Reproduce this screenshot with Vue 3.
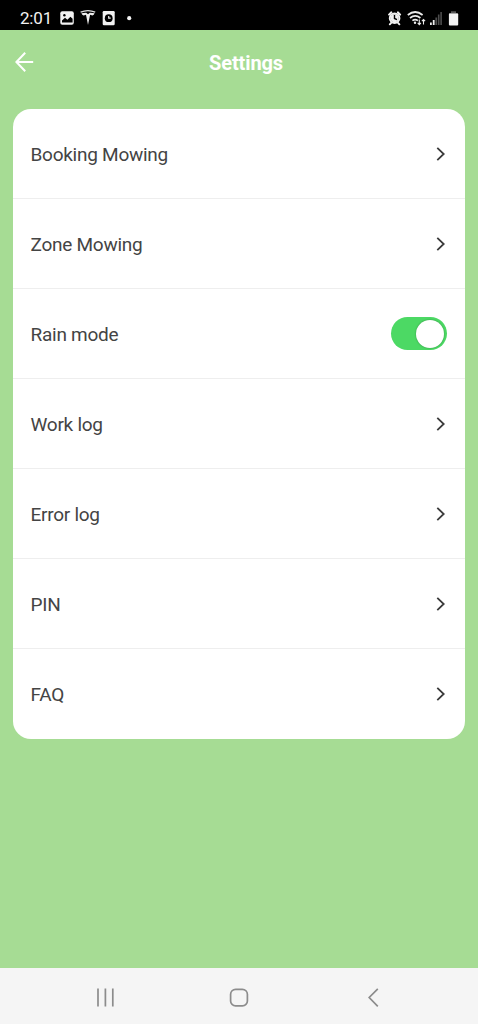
<script setup>
const rows = [
  { label: 'Booking Mowing' },
  { label: 'Zone Mowing' },
  { label: 'Rain mode', toggle: true },
  { label: 'Work log' },
  { label: 'Error log' },
  { label: 'PIN' },
  { label: 'FAQ' },
]
</script>

<template>
  <div class="screen">
    <div class="status">
      <span class="time">2:01</span>
      <svg class="left-icons" width="76" height="30" viewBox="58 0 76 30">
        <rect x="60.3" y="11.2" width="13.5" height="13.6" rx="2" fill="#f2f2f2" />
        <circle cx="64.4" cy="15.3" r="1.2" fill="#000" />
        <path d="M62 22.6v-2.2l3-2.6 2.4 2 3-3 2.2 2v3.8z" fill="#000" />
        <path d="M80.6 12.2Q88 9 95.2 12.2" fill="none" stroke="#ddd" stroke-width="1.3" />
        <path d="M81.4 13.3Q84 12.6 86.2 12.7L88 14.2l1.8-1.5q2.4-.1 4.8.6-.6 2.1-2.2 2.1l-2.3-.6L88 25l-2-10.2-2.4.6q-1.5 0-2.2-2.1z" fill="#eee" />
        <rect x="102.7" y="11" width="12" height="14.3" rx="1.2" fill="#f2f2f2" />
        <circle cx="108.7" cy="18.2" r="3.9" fill="#000" />
        <path d="M108.7 16v2.2h2" fill="none" stroke="#eee" stroke-width="1.2" />
        <circle cx="129.2" cy="18.2" r="2.1" fill="#f2f2f2" />
      </svg>
      <svg class="right-icons" width="78" height="30" viewBox="386 0 78 30">
        <circle cx="394.6" cy="18.2" r="4.8" fill="none" stroke="#f2f2f2" stroke-width="2" />
        <circle cx="394.6" cy="18.2" r="4" fill="#f2f2f2" />
        <path d="M389 14.6l2.4-2.3M400.2 14.6l-2.4-2.3M391.2 22.8l-1.4 1.5M398 22.8l1.4 1.5" stroke="#f2f2f2" stroke-width="1.9" stroke-linecap="round" />
        <path d="M394.5 15v3.5l2.5 1.2" fill="none" stroke="#000" stroke-width="1.4" />
        <g fill="none" stroke="#ececec" stroke-width="1.7">
          <path d="M407.8 15q7.4-6 14.8 0" />
          <path d="M410 18q5.2-4.2 10.4 0" />
          <path d="M412.4 20.7q2.8-2.2 5.5 0" />
        </g>
        <circle cx="415" cy="22.8" r="1.2" fill="#ececec" />
        <path d="M419.3 19.5v5M417.7 22.9l1.6 1.7 1.6-1.7M423.5 24.5v-5M421.9 21.2l1.6-1.7 1.6 1.7" fill="none" stroke="#ececec" stroke-width="1.1" />
        <path d="M430 22.4h1.8V25H430zM432.8 20h1.8v5h-1.8z" fill="#eee" />
        <path d="M435.4 17.4h1.7V25h-1.7zM437.9 14.6h1.6V25h-1.6zM440.3 12h1.6v13h-1.6z" fill="#4d4d4d" />
        <path d="M451 11.2h5v2h-5zM449 13h9v2h-9z" fill="#555" />
        <rect x="448.9" y="13.6" width="9.3" height="11.9" rx="1" fill="#f2f2f2" />
      </svg>
    </div>

    <header class="header">
      <svg class="back" width="20" height="22" viewBox="0 0 20 22">
        <path d="M11.2 1.8L2.4 11l8.8 9.2M2.6 11h16.6" fill="none" stroke="#fff" stroke-width="2" />
      </svg>
      <h1 class="title">Settings</h1>
    </header>

    <main class="card">
      <div v-for="row in rows" :key="row.label" class="row">
        <span class="label">{{ row.label }}</span>
        <span v-if="row.toggle" class="switch"><span class="knob"></span></span>
        <svg v-else class="chevron" width="12" height="16" viewBox="0 0 12 16">
          <path d="M2.3 1.8L8.7 8l-6.4 6.2" fill="none" stroke="#3c3c3c" stroke-width="1.8" />
        </svg>
      </div>
    </main>

    <nav class="nav">
      <svg width="478" height="56" viewBox="0 0 478 56">
        <g fill="none" stroke="#8c8c8c" stroke-width="1.7">
          <path d="M98 20.5v18M105.4 20.5v18M112.8 20.5v18" />
          <rect x="230.6" y="21.3" width="16.8" height="16.6" rx="5" />
          <path d="M377.8 20.8l-8.6 8.7 8.6 8.8" />
        </g>
      </svg>
    </nav>
  </div>
</template>

<style>
body {
  margin: 0;
}
</style>

<style scoped>
.screen {
  display: flex;
  flex-direction: column;
  width: 478px;
  height: 1024px;
  background: #a6dc94;
  font-family: Roboto, "Liberation Sans", sans-serif;
}
.status {
  display: flex;
  height: 30px;
  flex: none;
  background: #000;
}
.time {
  width: 38px;
  padding-left: 20px;
  line-height: 37px;
  font-size: 17px;
  letter-spacing: -0.2px;
  color: #f2f2f2;
}
.right-icons {
  margin-left: auto;
  margin-right: 14px;
}
.header {
  display: grid;
  grid-template-columns: 35px 1fr 21px;
  align-items: center;
  height: 66px;
  flex: none;
}
.back {
  margin-left: 14px;
  margin-top: -2px;
}
.title {
  margin: 0;
  text-align: center;
  font-size: 20px;
  font-weight: 700;
  line-height: 24px;
  letter-spacing: -0.1px;
  color: #fff;
}
.card {
  margin: 13px 13px 0;
  height: 630px;
  flex: none;
  border-radius: 18px;
  background: #fff;
  overflow: hidden;
}
.row {
  display: flex;
  align-items: center;
  justify-content: space-between;
  box-sizing: border-box;
  height: 90px;
  padding: 0 18px 0 17.5px;
  border-bottom: 1px solid #eee;
}
.row:last-child {
  border-bottom: 0;
}
.label {
  padding-top: 2px;
  font-size: 19px;
  line-height: 24px;
  letter-spacing: -0.26px;
  color: #444;
}
.switch {
  display: flex;
  justify-content: flex-end;
  align-items: center;
  box-sizing: border-box;
  width: 56px;
  height: 33px;
  padding-right: 3px;
  border-radius: 17px;
  background: #4cd964;
}
.knob {
  width: 28px;
  height: 28px;
  border-radius: 50%;
  background: #fff;
  box-shadow: 0 0 2px rgba(0, 0, 0, 0.35);
}
.nav {
  height: 56px;
  margin-top: auto;
  background: #f5f5f5;
}
.nav svg {
  display: block;
}
</style>
